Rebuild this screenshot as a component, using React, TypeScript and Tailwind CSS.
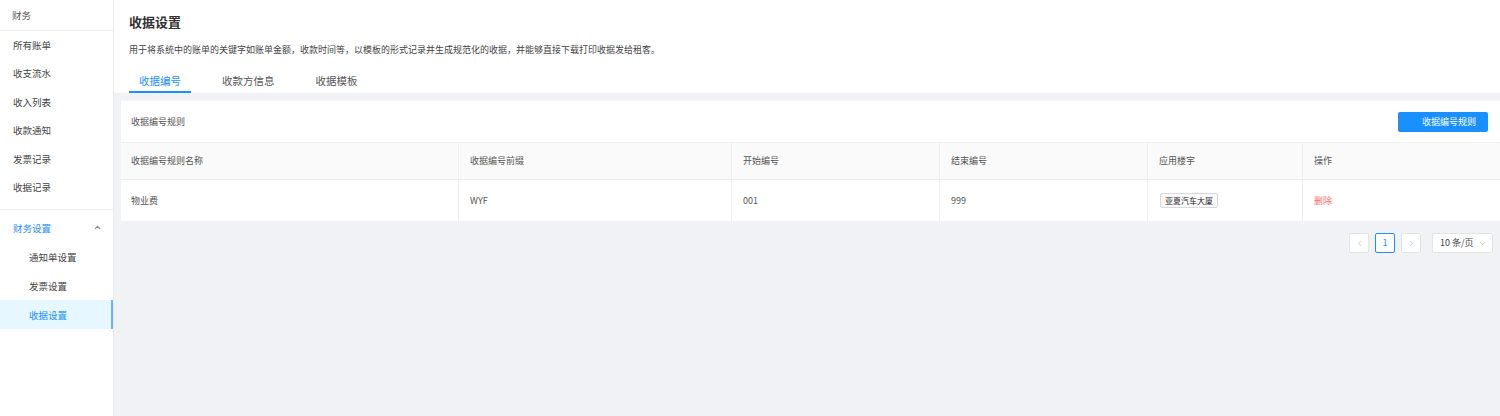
import React from "react";
import { ChevronUp, ChevronLeft, ChevronRight, ChevronDown } from "lucide-react";

const menu = ["所有账单", "收支流水", "收入列表", "收款通知", "发票记录", "收据记录"];
const sub = ["通知单设置", "发票设置", "收据设置"];

export default function App() {
  return (
    <div className="flex h-[416px] w-[1500px] overflow-hidden bg-[#f0f2f5] font-['Noto_Sans_CJK_SC','Liberation_Sans',sans-serif] text-[#555]">
      {/* Sidebar */}
      <aside className="flex w-[114px] shrink-0 flex-col border-r border-[#ebebeb] bg-white">
        <div className="flex h-[31px] items-center border-b border-[#eeeeee] pl-[12px] text-[9.5px] text-[#555]">
          财务
        </div>
        <div className="flex flex-col">
          {menu.map((m) => (
            <div key={m} className="flex h-[28.4px] items-center pl-[13px] text-[9.5px] text-[#444]">
              {m}
            </div>
          ))}
        </div>
        <div className="mt-[8px] border-t border-[#eeeeee] pt-[3px]">
          <div className="flex h-[29px] items-center justify-between pl-[13px] pr-[11px] text-[9.5px] text-[#1890ff]">
            <span>财务设置</span>
            <ChevronUp className="h-[9px] w-[9px] text-[#888]" strokeWidth={3} />
          </div>
          {sub.map((s, i) => (
            <div
              key={s}
              className={
                i === 2
                  ? "flex h-[29px] items-center border-r-2 border-[#6fb3f7] bg-[#e6f7ff] pl-[29px] text-[9.5px] text-[#1890ff]"
                  : "flex h-[29px] items-center pl-[29px] text-[9.5px] text-[#444]"
              }
            >
              {s}
            </div>
          ))}
        </div>
      </aside>

      {/* Main */}
      <main className="flex min-w-0 flex-1 flex-col">
        <header className="flex h-[93px] shrink-0 flex-col bg-white pl-[15px]">
          <div className="mt-[13px] h-[18px] text-[13px] font-bold leading-[18px] text-[#333]">收据设置</div>
          <div className="mt-[13px] h-[12px] text-[9px] leading-[12px] text-[#444]">
            用于将系统中的账单的关键字如账单金额，收款时间等，以模板的形式记录并生成规范化的收据，并能够直接下载打印收据发给租客。
          </div>
          <div className="flex h-[37px] items-end gap-[21px]">
            <div className="flex h-[37px] items-end border-b-2 border-[#1890ff] px-[10px] pb-[3px] text-[10.5px] leading-[14px] text-[#1890ff]">
              收据编号
            </div>
            <div className="flex h-[37px] items-end px-[10px] pb-[5px] text-[10.5px] leading-[14px] text-[#555]">
              收款方信息
            </div>
            <div className="flex h-[37px] items-end px-[10px] pb-[5px] text-[10.5px] leading-[14px] text-[#555]">
              收据模板
            </div>
          </div>
        </header>

        <section className="flex flex-col pl-[7px]">
          <div className="mt-[8px] bg-white">
            <div className="flex h-[42px] items-center justify-between border-b border-[#f0f0f0] pl-[10px] pr-[12px]">
              <span className="text-[9px] text-[#555]">收据编号规则</span>
              <button className="flex h-[20px] w-[90px] items-center justify-end rounded-[2px] bg-[#1890ff] pr-[12px] text-[9px] text-white">
                收据编号规则
              </button>
            </div>
            <div className="grid h-[37px] grid-cols-[337px_273px_208px_208px_155px_1fr] border-b border-[#eeeeee] bg-[#fafafa] text-[9px] text-[#555]">
              <div className="flex items-center pl-[10px]">收据编号规则名称</div>
              <div className="flex items-center border-l border-[#eeeeee] pl-[11px]">收据编号前缀</div>
              <div className="flex items-center border-l border-[#eeeeee] pl-[11px]">开始编号</div>
              <div className="flex items-center border-l border-[#eeeeee] pl-[11px]">结束编号</div>
              <div className="flex items-center border-l border-[#eeeeee] pl-[11px]">应用楼宇</div>
              <div className="flex items-center border-l border-[#eeeeee] pl-[11px]">操作</div>
            </div>
            <div className="grid h-[41px] grid-cols-[337px_273px_208px_208px_155px_1fr] text-[9px] text-[#555]">
              <div className="flex items-center pl-[10px]">物业费</div>
              <div className="flex items-center border-l border-[#eeeeee] pl-[11px]">WYF</div>
              <div className="flex items-center border-l border-[#eeeeee] pl-[11px]">001</div>
              <div className="flex items-center border-l border-[#eeeeee] pl-[11px]">999</div>
              <div className="flex items-center border-l border-[#eeeeee] pl-[12px]">
                <span className="flex h-[15px] items-center rounded-[2px] border border-[#d9d9d9] bg-[#fafafa] px-[4px] text-[8px] text-[#222]">
                  亚夏汽车大厦
                </span>
              </div>
              <div className="flex items-center border-l border-[#eeeeee] pl-[11px] text-[#ff6b6b]">删除</div>
            </div>
          </div>

          <div className="mt-[12px] flex items-center justify-end pr-[7px]">
            <div className="flex h-[20px] w-[20px] items-center justify-center rounded-[2px] border border-[#e3e3e3] bg-white">
              <ChevronLeft className="h-[9px] w-[9px] text-[#bbb]" strokeWidth={2} />
            </div>
            <div className="ml-[6px] flex h-[20px] w-[20px] items-center justify-center rounded-[2px] border border-[#1890ff] bg-white text-[9px] text-[#1890ff]">
              1
            </div>
            <div className="ml-[6px] flex h-[20px] w-[20px] items-center justify-center rounded-[2px] border border-[#e3e3e3] bg-white">
              <ChevronRight className="h-[9px] w-[9px] text-[#bbb]" strokeWidth={2} />
            </div>
            <div className="ml-[11px] flex h-[20px] w-[61px] items-center justify-between rounded-[2px] border border-[#e3e3e3] bg-white pl-[7px] pr-[5px] text-[9px] text-[#444]">
              <span>10 条/页</span>
              <ChevronDown className="h-[9px] w-[9px] text-[#bbb]" strokeWidth={2} />
            </div>
          </div>
        </section>
      </main>
    </div>
  );
}
